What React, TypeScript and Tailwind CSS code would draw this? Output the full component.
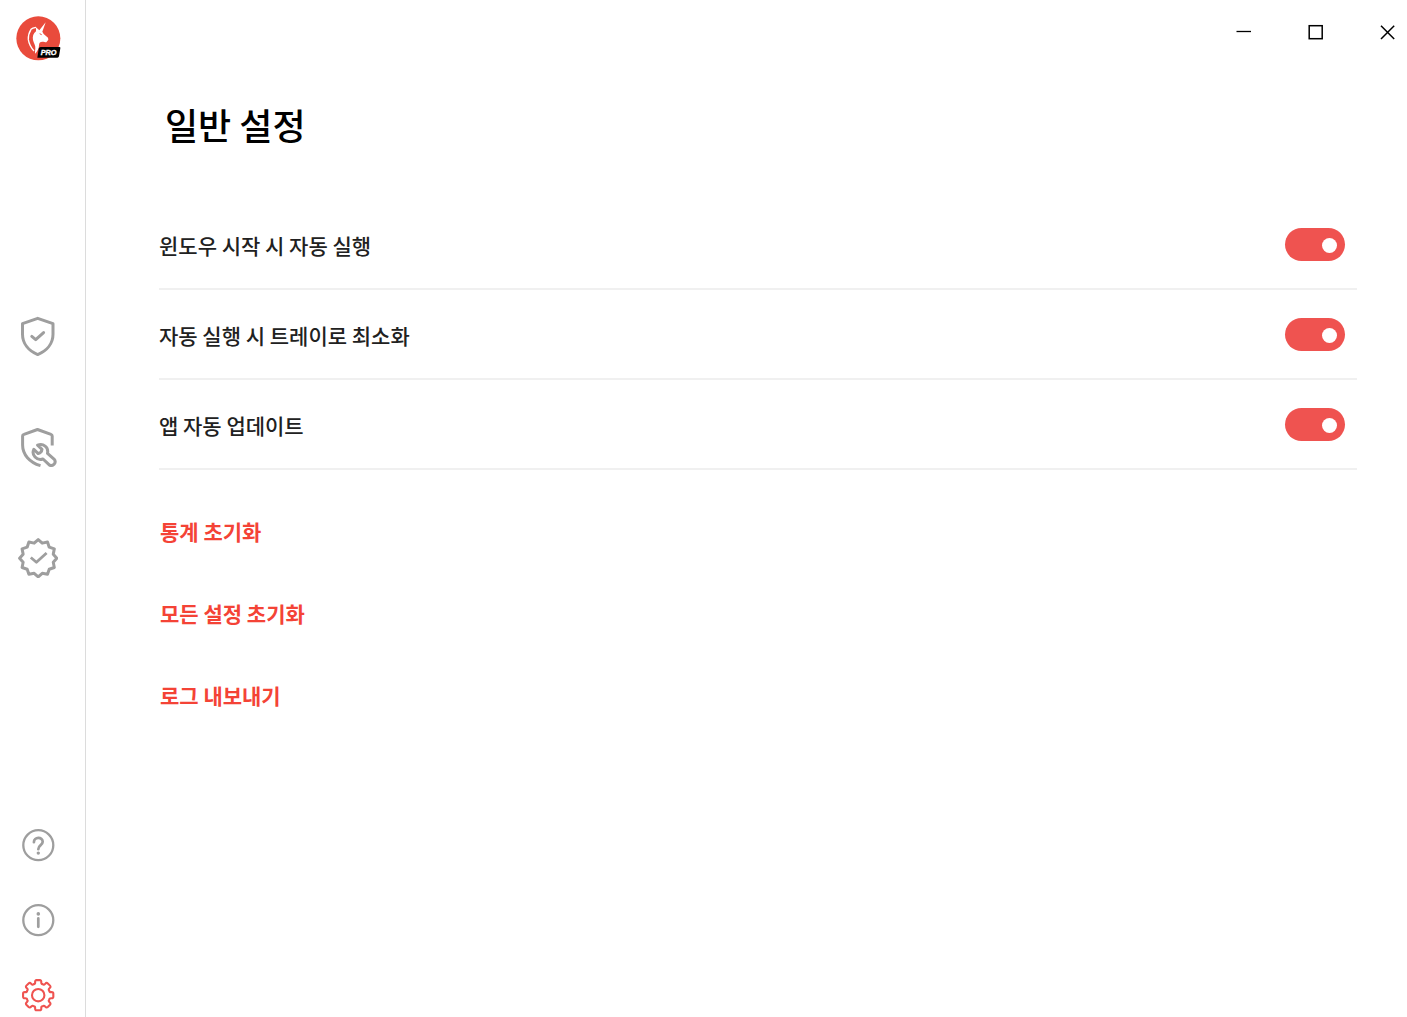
import { useState } from 'react';

const polar = (cx: number, cy: number, r: number, deg: number) => {
  const a = ((deg - 90) * Math.PI) / 180;
  return `${(cx + r * Math.cos(a)).toFixed(2)} ${(cy + r * Math.sin(a)).toFixed(2)}`;
};

// 12 pointed seal
const sealPoints = Array.from({ length: 24 }, (_, i) =>
  polar(20.2, 20.2, i % 2 ? 15.6 : 18.6, i * 15)
).join(' ');

// 8 rounded teeth
const gearPath =
  Array.from({ length: 8 }, (_, i) => {
    const a = i * 45;
    const p = (r: number, d: number) => polar(17.2, 17.2, r, a + d);
    return `${i ? 'L' : 'M'}${p(13.6, -13)} Q${p(15.4, -12)} ${p(15.2, -6)} L${p(15.2, 6)} Q${p(15.4, 12)} ${p(13.6, 13)} Q${p(11.2, 15)} ${p(12, 22.5)} Q${p(11.2, 30)} ${p(13.6, 32)}`;
  }).join(' ') + 'Z';

const Logo = () => (
  <svg width="46" height="45" viewBox="-3 0 138 135" aria-label="Unicorn Pro">
    <circle cx="67" cy="67" r="66" fill="#e94b3c" />
    <path
      d="M89 19L70 43L60 34L60 46C52 52 49 62 51 72C53 82 59 88 58 97C58 103 56 107 58 113C65 105 69 97 69 88C69 80 73 77 79 77C84 77 87 79 91 79L94 75L97 71L96 65L83 54L79 47Z"
      fill="#fff"
    />
    <path
      d="M60 34C54 35 48 37 45 40C39 50 36 60 37 71C39 84 44 94 54 105"
      fill="none"
      stroke="#fff"
      strokeWidth="4"
    />
    <path d="M71 53l6 3" stroke="#e94b3c" strokeWidth="3" />
    <path d="M74 93H130Q134 93 133 97L129 121Q128 125 124 125H64L68 98Q69 93 74 93Z" fill="#000" />
    <text
      x="74"
      y="117"
      fill="#fff"
      stroke="#fff"
      strokeWidth="1"
      fontFamily="Liberation Sans, sans-serif"
      fontSize="22"
      fontWeight="700"
      fontStyle="italic"
    >
      PRO
    </text>
  </svg>
);

const mainIcons = [
  {
    label: '보호',
    icon: (
      <>
        <path d="M19.7 2.3L35 7.7V18.3C35 27.3 29 34.8 19.7 38.6C10.5 34.8 4.5 27.3 4.5 18.3V7.7Z" />
        <path d="M13.8 20.4L17.7 23.7L25.6 16.6" strokeLinecap="round" />
      </>
    ),
  },
  {
    label: '복구',
    icon: (
      <>
        <path d="M34.2 18.5V9Q34.2 7.8 33 7.4L19.5 2.5L6 7.4Q4.6 7.8 4.6 9V18C4.6 27.5 11.5 35.4 22.5 38.6" />
        <path d="M19.6 18.2L24 22.4Q23.6 25.8 20.2 26.6L15.8 22.3C13.2 28 18.6 34 25 32L31 37.7Q33.6 39.6 36.1 37.2Q38.3 34.6 36 32.1L29.5 26.4C30.8 20.2 25.2 16 19.6 18.2Z" />
      </>
    ),
  },
  {
    label: '인증',
    icon: (
      <>
        <polygon points={sealPoints} />
        <path d="M12.8 19.5L18.4 24.2L28.6 15" strokeWidth="2.8" />
      </>
    ),
  },
];

const footerIcons = [
  {
    label: '도움말',
    icon: (
      <>
        <circle cx="17.3" cy="17.2" r="15" />
        <path
          d="M12.9 14.2C12.9 8.6 21.7 8.6 21.7 13.8C21.7 17.4 17.3 16.8 17.3 21.2"
          strokeWidth="2.7"
          strokeLinecap="round"
        />
        <circle cx="17.3" cy="25.1" r="1.7" fill="currentColor" stroke="none" />
      </>
    ),
  },
  {
    label: '정보',
    icon: (
      <>
        <circle cx="17.3" cy="17.2" r="15" />
        <circle cx="17.3" cy="10.9" r="1.8" fill="currentColor" stroke="none" />
        <path d="M17.3 15.4V23.8" strokeWidth="2.7" strokeLinecap="round" />
      </>
    ),
  },
  {
    label: '설정',
    active: true,
    icon: (
      <>
        <path d={gearPath} strokeWidth="2.1" />
        <circle cx="17.2" cy="17.2" r="6.2" strokeWidth="2.1" />
      </>
    ),
  },
];

const Sidebar = () => (
  <aside className="flex w-[86px] shrink-0 flex-col items-center justify-between border-r border-[#dcdcdc] pt-4 pr-[9px] pb-[5px]">
    <div className="h-[50px]">
      <Logo />
    </div>
    <nav className="flex flex-col gap-[71px] text-[#9e9e9e]">
      {mainIcons.map((item) => (
        <button key={item.label} type="button" aria-label={item.label}>
          <svg
            width="40"
            height="40"
            viewBox="0 0 40 40"
            fill="none"
            stroke="currentColor"
            strokeWidth="3"
            strokeLinejoin="round"
          >
            {item.icon}
          </svg>
        </button>
      ))}
    </nav>
    <nav className="flex flex-col gap-[41px]">
      {footerIcons.map((item) => (
        <button
          key={item.label}
          type="button"
          aria-label={item.label}
          className={item.active ? 'text-[#ef5350]' : 'text-[#9e9e9e]'}
        >
          <svg
            width="34"
            height="34"
            viewBox="0 0 34 34"
            fill="none"
            stroke="currentColor"
            strokeWidth="2.3"
            strokeLinejoin="round"
          >
            {item.icon}
          </svg>
        </button>
      ))}
    </nav>
  </aside>
);

const WindowControls = () => (
  <div className="flex justify-end gap-8">
    <button type="button" aria-label="최소화" className="flex h-16 w-10 items-center justify-center">
      <svg width="16" height="16" viewBox="0 0 16 16" stroke="#000" fill="none">
        <path d="M1.5 7.5H16" strokeWidth="1.3" />
      </svg>
    </button>
    <button type="button" aria-label="최대화" className="flex h-16 w-10 items-center justify-center">
      <svg width="16" height="16" viewBox="0 0 16 16" stroke="#000" fill="none">
        <rect x="2.2" y="1.7" width="13" height="13" strokeWidth="1.5" />
      </svg>
    </button>
    <button type="button" aria-label="닫기" className="flex h-16 w-10 items-center justify-center">
      <svg width="16" height="16" viewBox="0 0 16 16" stroke="#000" fill="none">
        <path d="M2 1.8L15.2 15M15.2 1.8L2 15" strokeWidth="1.5" />
      </svg>
    </button>
  </div>
);

const SettingRow = ({ id, label }: { id: string; label: string }) => {
  const [on, setOn] = useState(true);

  return (
    <div className="flex h-[90px] items-center justify-between border-b-2 border-[#f0f0f0] pr-3">
      <label htmlFor={id} className="pt-0.5 text-[21px] leading-8 font-medium text-[#212121]">
        {label}
      </label>
      <input
        id={id}
        type="checkbox"
        role="switch"
        checked={on}
        onChange={() => setOn(!on)}
        className="flex h-[33px] w-[60px] cursor-pointer appearance-none items-center rounded-full bg-gray-300 px-2 pt-0.5 before:size-[15px] before:rounded-full before:bg-white checked:justify-end checked:bg-[#ef5350]"
      />
    </div>
  );
};

const App = () => {
  return (
    <div className="flex min-h-screen bg-white font-['Noto_Sans_CJK_KR',sans-serif]">
      <Sidebar />
      <main className="min-w-0 flex-1">
        <WindowControls />
        <div className="pr-[50px] pl-[73px]">
          <h1 className="mt-[34px] pl-[6px] text-[36px] leading-[52px] font-medium text-black">일반 설정</h1>
          <section className="mt-[50px]">
            <SettingRow id="auto-start" label="윈도우 시작 시 자동 실행" />
            <SettingRow id="start-tray" label="자동 실행 시 트레이로 최소화" />
            <SettingRow id="auto-update" label="앱 자동 업데이트" />
          </section>
          <div className="mt-[45px] flex flex-col items-start gap-[50px] pl-px text-[21px] leading-8 font-bold text-[#f44336]">
            <button type="button">통계 초기화</button>
            <button type="button">모든 설정 초기화</button>
            <button type="button">로그 내보내기</button>
          </div>
        </div>
      </main>
    </div>
  );
};

export default App;
